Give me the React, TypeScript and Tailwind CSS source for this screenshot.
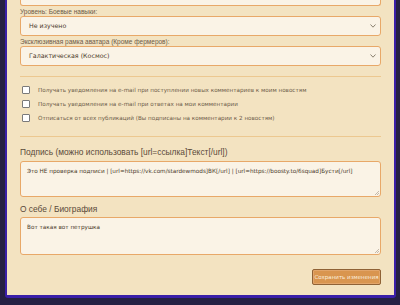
import React from "react";

const Chevron = () => (
    <svg width="6" height="4" viewBox="0 0 6 4" className="shrink-0">
        <path d="M0.5 0.5 L3 3.2 L5.5 0.5" fill="none" stroke="#8a8070" strokeWidth="1" />
    </svg>
);

const Select: React.FC<{value: string}> = ({value}) => (
    <div className="h-[20px] flex items-center justify-between pl-[8px] pr-[4px] bg-[#faf3e6] border border-[#e8a868] rounded-[3px] text-[6.3px] text-[#4a3a2a]">
        <span>{value}</span>
        <Chevron />
    </div>
);

const Check: React.FC<{label: string}> = ({label}) => (
    <label className="flex items-center gap-x-[8px] h-[14px] pl-[2px]">
        <span className="w-[8px] h-[8px] border border-[#7a7a7a] bg-white rounded-[1px] shrink-0" />
        <span className="text-[5.65px] text-[#6b5a48]">{label}</span>
    </label>
);

const TextArea: React.FC<{value: string; h: string}> = ({value, h}) => (
    <div className={`${h} relative bg-[#faf3e6] border border-[#e8a868] rounded-[3px] px-[6px] pt-[5px] text-[5.7px] text-[#4a3a2a]`}>
        {value}
        <svg width="4" height="4" viewBox="0 0 4 4" className="absolute right-[1px] bottom-[1px]">
            <path d="M0 4 L4 0 M2 4 L4 2" stroke="#a09080" strokeWidth="0.6" />
        </svg>
    </div>
);

const sans = {fontFamily: '"Liberation Sans", Arial, sans-serif'};

export default function App() {
    return (
        <div className="w-[400px] h-[305px] overflow-hidden bg-[#252043]" style={{fontFamily: '"DejaVu Sans", sans-serif'}}>
            <div className="ml-[5px] w-[391px] h-[298px] bg-[#f3e3c1] border-x-[2px] border-b-[3px] border-[#3a1fa8] rounded-bl-[3px] rounded-br-[3px]">
                <div className="pl-[13px] pr-[13px] flex flex-col">
                    {/* top field, cut by the window */}
                    <div className="h-[6px] bg-[#faf3e6] border border-t-0 border-[#e8a868] rounded-b-[3px]" />

                    <div className="mt-[2px] text-[6.5px] leading-[8px] text-[#6b5a48]" style={sans}>Уровень: Боевые навыки:</div>
                    <Select value="Не изучено" />

                    <div className="mt-[1px] text-[6.5px] leading-[9px] text-[#6b5a48]" style={sans}>Эксклюзивная рамка аватара (Кроме фермеров):</div>
                    <Select value="Галактическая (Космос)" />

                    <div className="mt-[10px] border-t border-[#ecc890]" />

                    <div className="mt-[6px] flex flex-col">
                        <Check label="Получать уведомления на e-mail при поступлении новых комментариев к моим новостям" />
                        <Check label="Получать уведомления на e-mail при ответах на мои комментарии" />
                        <Check label="Отписаться от всех публикаций (Вы подписаны на комментарии к 2 новостям)" />
                    </div>

                    <div className="mt-[11px] border-t border-[#ecc890]" />

                    <div className="mt-[9px] text-[8.4px] leading-[12px] text-[#5a4a3a]" style={sans}>
                        Подпись (можно использовать [url=ссылка]Текст[/url])
                    </div>
                    <div className="mt-[3px]">
                        <TextArea h="h-[36px]" value="Это НЕ проверка подписи | [url=https://vk.com/stardewmods]ВК[/url] | [url=https://boosty.to/6squad]Бусти[/url]" />
                    </div>

                    <div className="mt-[6px] text-[8.4px] leading-[12px] text-[#5a4a3a]" style={sans}>
                        О себе / Биография
                    </div>
                    <div className="mt-[2px]">
                        <TextArea h="h-[38px]" value="Вот такая вот петрушка" />
                    </div>

                    <div className="mt-[14px] flex justify-end">
                        <button className="w-[69px] h-[16px] bg-[#d9954f] border border-[#8f6236] rounded-[2px] text-[5.5px] text-[#fbeedd] shadow-[inset_0_0_0_1px_#e2a56a]">
                            Сохранить изменения
                        </button>
                    </div>
                </div>
            </div>
        </div>
    );
}
